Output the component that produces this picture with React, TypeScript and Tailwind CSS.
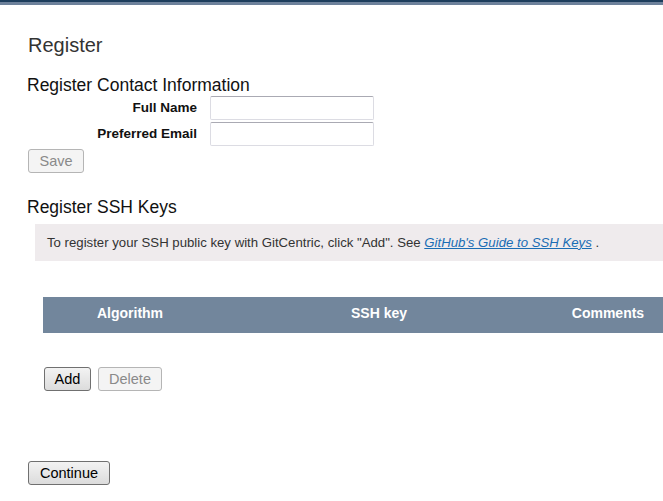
import React from 'react';

const btnBase = 'h-6 rounded-[3px] border text-[14.5px] leading-none px-2';
const btnActive = `${btnBase} border-[#707070] bg-gradient-to-b from-[#f3f3f3] to-[#dcdcdc] text-black`;
const btnDisabled = `${btnBase} border-[#b5b5b5] bg-[#f4f4f4] text-[#8a8a8a]`;

const App: React.FC = () => (
  <div className="w-full min-h-[501px] overflow-hidden bg-white font-['Liberation_Sans',Arial,sans-serif]">
    {/* top strip */}
    <div className="h-[2px] bg-[#1d3d5c]" />
    <div className="h-[3px] bg-[#6d819b]" />

    <div className="pl-[28px]">
      <h1 className="mt-[29px] text-[20px] leading-[23px] text-[#333]">Register</h1>

      {/* Contact information */}
      <h2 className="mt-[18px] -ml-px text-[17.5px] leading-[20px] text-[#111]">Register Contact Information</h2>
      <div className="mt-px flex flex-col gap-[2px]">
        <div className="flex items-center">
          <label className="w-[169px] pt-px text-right text-[13.5px] font-bold text-[#111]">Full Name</label>
          <input className="ml-[13px] h-6 w-[164px] rounded-[2px] border border-[#dcdce3] border-t-[#aaaab3] outline-none" />
        </div>
        <div className="flex items-center">
          <label className="w-[169px] pt-px text-right text-[13.5px] font-bold text-[#111]">Preferred Email</label>
          <input className="ml-[13px] h-6 w-[164px] rounded-[2px] border border-[#dcdce3] border-t-[#aaaab3] outline-none" />
        </div>
      </div>
      <button disabled className={`mt-[3px] w-[56px] ${btnDisabled}`}>Save</button>

      {/* SSH keys */}
      <h2 className="mt-[24px] -ml-px text-[17.5px] leading-[20px] text-[#111]">Register SSH Keys</h2>
      <div className="mt-[7px] ml-[7px] flex h-[37px] items-center bg-[#efebed] pl-3 text-[13.2px] text-[#333]">
        <span>
          To register your SSH public key with GitCentric, click "Add". See{' '}
          <a className="italic text-[#1a6db4] underline">GitHub's Guide to SSH Keys</a> .
        </span>
      </div>

      <div className="mt-[36px] ml-[15px] overflow-hidden">
        <div className="grid h-[36px] w-[632px] grid-cols-[174px_324px_134px] items-center bg-[#72869c] pb-[3px] text-[14px] font-bold text-white">
          <div className="text-center">Algorithm</div>
          <div className="text-center">SSH key</div>
          <div className="text-center">Comments</div>
        </div>
      </div>

      <div className="mt-[34px] ml-[16px] flex gap-[7px]">
        <button className={`w-[47px] ${btnActive}`}>Add</button>
        <button disabled className={`w-[64px] ${btnDisabled}`}>Delete</button>
      </div>

      <button className={`mt-[70px] w-[82px] ${btnActive}`}>Continue</button>
    </div>
  </div>
);

export default App;
